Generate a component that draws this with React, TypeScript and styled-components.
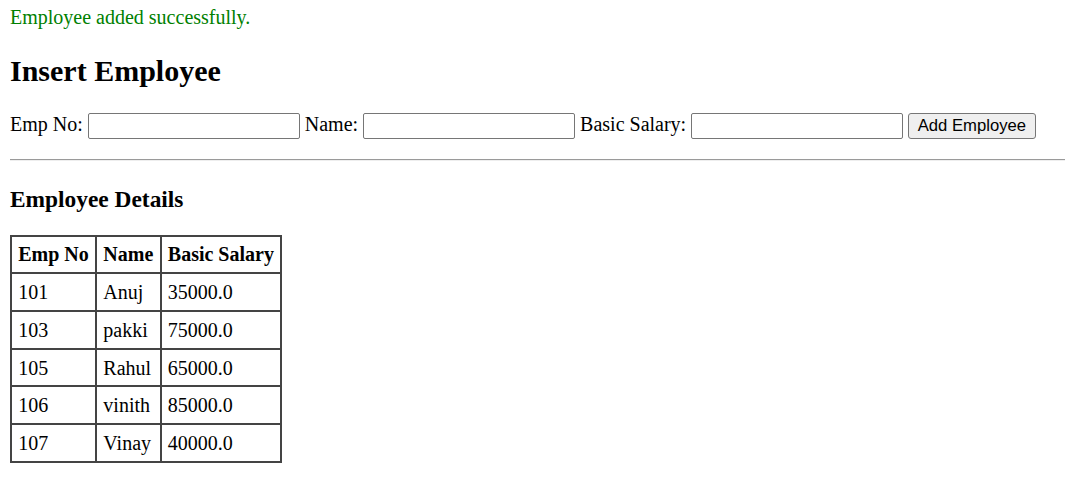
import React from "react";
import styled, { createGlobalStyle } from "styled-components";

const Global = createGlobalStyle`
  html, body { background: #ffffff; }
  body {
    margin: 6px 1px 0 10px;
    font-family: "Liberation Serif", "Times New Roman", serif;
    font-size: 20px;
    color: #000000;
  }
`;

const Message = styled.div`
  color: #008000;
`;

const Title = styled.h2`
  font-size: 30px;
  font-weight: bold;
  margin: 24.9px 0;
`;

const Form = styled.form`
  margin: 0 0 20px;
`;

const Label = styled.label``;

const Input = styled.input`
  box-sizing: border-box;
  width: 212px;
  height: 26px;
  padding: 1px 2px;
  border: 1px solid #767676;
  border-radius: 2px;
  font-family: "Liberation Sans", Arial, sans-serif;
  font-size: 16.67px;
  background: #ffffff;
  vertical-align: baseline;
`;

const Button = styled.button`
  box-sizing: border-box;
  height: 26px;
  padding: 0 8.5px;
  border: 1px solid #767676;
  border-radius: 3px;
  background: #efefef;
  color: #000000;
  font-family: "Liberation Sans", Arial, sans-serif;
  font-size: 16.67px;
`;

const Rule = styled.hr`
  margin: 10px 0;
  height: 0;
  border: 0;
  border-top: 1px solid #9a9a9a;
  border-bottom: 1px solid #eeeeee;
`;

const SubTitle = styled.h3`
  font-size: 23.4px;
  font-weight: bold;
  margin: 25px 0 21.8px;
`;

const Table = styled.table`
  border-collapse: collapse;
  border: 2px solid #444444;
`;

const Head = styled.th`
  border: 2px solid #444444;
  padding: 6.75px 6.25px 5.75px;
  font-weight: bold;
  text-align: left;
`;

const Cell = styled.td`
  border: 2px solid #444444;
  padding: 6.9px 6.25px 5.9px;
`;

const rows = [
  { no: "101", name: "Anuj", salary: "35000.0" },
  { no: "103", name: "pakki", salary: "75000.0" },
  { no: "105", name: "Rahul", salary: "65000.0" },
  { no: "106", name: "vinith", salary: "85000.0" },
  { no: "107", name: "Vinay", salary: "40000.0" },
];

export default function App() {
  return (
    <>
      <Global />
      <Message>Employee added successfully.</Message>
      <Title>Insert Employee</Title>
      <Form onSubmit={(e) => e.preventDefault()}>
        <Label>Emp No:</Label> <Input type="text" />{" "}
        <Label>Name:</Label> <Input type="text" />{" "}
        <Label>Basic Salary:</Label> <Input type="text" />{" "}
        <Button type="submit">Add Employee</Button>
      </Form>
      <Rule />
      <SubTitle>Employee Details</SubTitle>
      <Table>
        <thead>
          <tr>
            <Head>Emp No</Head>
            <Head>Name</Head>
            <Head>Basic Salary</Head>
          </tr>
        </thead>
        <tbody>
          {rows.map((r) => (
            <tr key={r.no}>
              <Cell>{r.no}</Cell>
              <Cell>{r.name}</Cell>
              <Cell>{r.salary}</Cell>
            </tr>
          ))}
        </tbody>
      </Table>
    </>
  );
}
